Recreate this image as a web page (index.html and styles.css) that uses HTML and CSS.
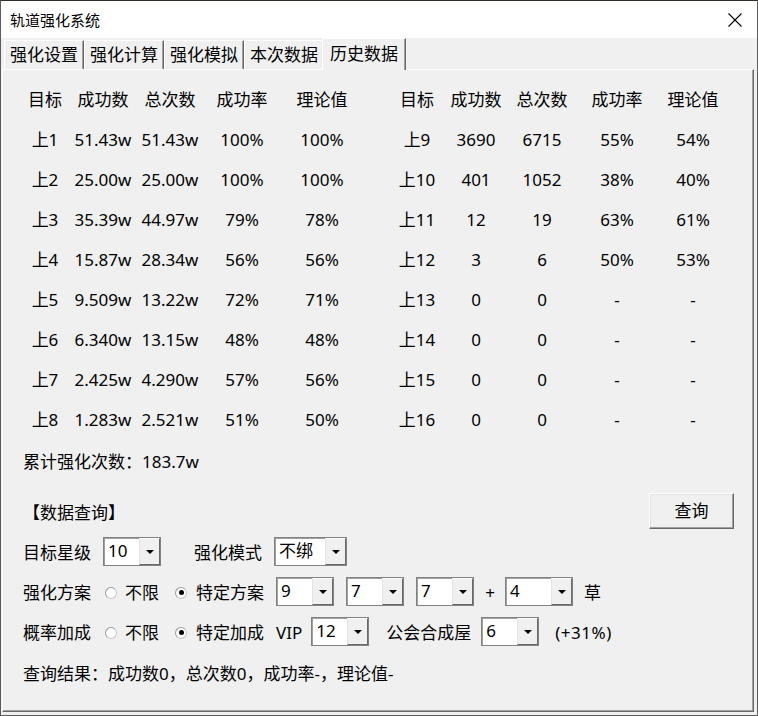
FILE: index.html
```html
<!DOCTYPE html>
<html lang="zh-CN">
<head>
<meta charset="utf-8">
<title>轨道强化系统</title>
<link rel="stylesheet" href="styles.css">
</head>
<body>
<div class="window">
  <div class="titlebar">
    <span class="title">轨道强化系统</span>
    <svg class="close" width="14" height="14" viewBox="0 0 14 14"><path d="M0.5 0.5 L13.5 13.5 M13.5 0.5 L0.5 13.5" stroke="#000" stroke-width="1.1" fill="none"/></svg>
  </div>
  <div class="tabs">
    <div class="tab">强化设置</div>
    <div class="tab">强化计算</div>
    <div class="tab">强化模拟</div>
    <div class="tab">本次数据</div>
    <div class="tab active">历史数据</div>
  </div>
  <div class="panel">
    <div class="grid">
      <div>目标</div><div>成功数</div><div>总次数</div><div>成功率</div><div>理论值</div><div></div><div>目标</div><div>成功数</div><div>总次数</div><div>成功率</div><div>理论值</div>
      <div>上1</div><div>51.43w</div><div>51.43w</div><div>100%</div><div>100%</div><div></div><div>上9</div><div>3690</div><div>6715</div><div>55%</div><div>54%</div>
      <div>上2</div><div>25.00w</div><div>25.00w</div><div>100%</div><div>100%</div><div></div><div>上10</div><div>401</div><div>1052</div><div>38%</div><div>40%</div>
      <div>上3</div><div>35.39w</div><div>44.97w</div><div>79%</div><div>78%</div><div></div><div>上11</div><div>12</div><div>19</div><div>63%</div><div>61%</div>
      <div>上4</div><div>15.87w</div><div>28.34w</div><div>56%</div><div>56%</div><div></div><div>上12</div><div>3</div><div>6</div><div>50%</div><div>53%</div>
      <div>上5</div><div>9.509w</div><div>13.22w</div><div>72%</div><div>71%</div><div></div><div>上13</div><div>0</div><div>0</div><div>-</div><div>-</div>
      <div>上6</div><div>6.340w</div><div>13.15w</div><div>48%</div><div>48%</div><div></div><div>上14</div><div>0</div><div>0</div><div>-</div><div>-</div>
      <div>上7</div><div>2.425w</div><div>4.290w</div><div>57%</div><div>56%</div><div></div><div>上15</div><div>0</div><div>0</div><div>-</div><div>-</div>
      <div>上8</div><div>1.283w</div><div>2.521w</div><div>51%</div><div>50%</div><div></div><div>上16</div><div>0</div><div>0</div><div>-</div><div>-</div>
    </div>
    <div class="total">累计强化次数：183.7w</div>
    <div class="query-head">
      <span class="qtitle">【数据查询】</span>
      <button class="btn">查询</button>
    </div>
    <div class="row">
      <span class="txt">目标星级</span>
      <span class="combo"><span class="val">10</span><span class="drop"></span></span>
      <span class="txt sp-mode">强化模式</span>
      <span class="combo wide"><span class="val">不绑</span><span class="drop"></span></span>
    </div>
    <div class="row">
      <span class="txt">强化方案</span>
      <span class="radio first"><span class="dot"></span><span class="txt">不限</span></span>
      <span class="radio second"><span class="dot on"></span><span class="txt">特定方案</span></span>
      <span class="combo"><span class="val">9</span><span class="drop"></span></span>
      <span class="combo"><span class="val">7</span><span class="drop"></span></span>
      <span class="combo"><span class="val">7</span><span class="drop"></span></span>
      <span class="txt plus">+</span>
      <span class="combo mid"><span class="val">4</span><span class="drop"></span></span>
      <span class="txt grass">草</span>
    </div>
    <div class="row">
      <span class="txt">概率加成</span>
      <span class="radio first"><span class="dot"></span><span class="txt">不限</span></span>
      <span class="radio second"><span class="dot on"></span><span class="txt">特定加成</span></span>
      <span class="txt vip">VIP</span>
      <span class="combo tight"><span class="val">12</span><span class="drop"></span></span>
      <span class="txt guild">公会合成屋</span>
      <span class="combo guild-combo"><span class="val">6</span><span class="drop"></span></span>
      <span class="txt bonus">(+31%)</span>
    </div>
    <div class="result">查询结果：成功数0，总次数0，成功率-，理论值-</div>
  </div>
</div>
</body>
</html>
```

FILE: styles.css
```css
* { box-sizing: border-box; }
html, body { margin: 0; padding: 0; }
body {
  width: 758px;
  height: 716px;
  background: #f0f0f0;
  font-family: "Noto Sans", "Noto Sans CJK SC", sans-serif;
  font-size: 17px;
  color: #000;
  overflow: hidden;
}
.window {
  width: 758px;
  height: 716px;
  border: 1px solid #5c5c5c;
  border-top-color: #2e2e26;
  background: #f0f0f0;
  display: flex;
  flex-direction: column;
}
.titlebar {
  height: 37px;
  background: #fff;
  display: flex;
  align-items: center;
  justify-content: space-between;
  padding: 0 15px 0 9px;
  flex: none;
}
.title {
  font-size: 15px;
  line-height: 20px;
}
.close { display: block; }
.tabs {
  height: 31px;
  flex: none;
  display: flex;
  align-items: flex-start;
  padding-left: 3px;
}
.tab {
  width: 80px;
  height: 29px;
  margin-top: 2px;
  border-top: 1px solid #fff;
  border-left: 1px solid #fff;
  border-right: 1px solid #696969;
  box-shadow: inset -1px 0 #a0a0a0;
  background: #f0f0f0;
  line-height: 27px;
  text-align: center;
  white-space: nowrap;
}
.tab.active {
  position: relative;
  z-index: 1;
  width: 84px;
  height: 32px;
  margin-top: 0;
  margin-left: -2px;
  line-height: 30px;
}
.panel {
  flex: 1;
  margin: 0 3px 3px 1px;
  border-top: 1px solid #fff;
  border-left: 1px solid #fff;
  border-right: 1px solid #696969;
  border-bottom: 1px solid #696969;
  box-shadow: inset -1px -1px #a0a0a0;
  background: #f0f0f0;
  padding: 10px 0 0 0;
}
.grid {
  display: grid;
  grid-template-columns: 58px 58px 76px 68px 92px 20px 58px 60px 72px 78px 74px;
  grid-auto-rows: 40px;
  margin-left: 13px;
  align-items: center;
  text-align: center;
  line-height: 24px;
  white-space: nowrap;
}
.total {
  margin-top: 2px;
  height: 40px;
  line-height: 40px;
  padding-left: 20px;
}
.query-head {
  margin-top: 11px;
  height: 36px;
  display: flex;
  align-items: center;
  justify-content: space-between;
  padding: 0 19px 0 20px;
}
.qtitle { line-height: 24px; padding-top: 4px; }
.btn {
  width: 85px;
  height: 36px;
  font: inherit;
  font-size: 17px;
  color: #000;
  background: #f0f0f0;
  border-top: 1px solid #fff;
  border-left: 1px solid #fff;
  border-right: 1px solid #696969;
  border-bottom: 1px solid #696969;
  box-shadow: inset -1px -1px #a0a0a0, inset 1px 1px #e3e3e3;
  padding: 0;
  line-height: 32px;
}
.row {
  display: flex;
  align-items: center;
  gap: 12px;
  height: 29px;
  padding-left: 20px;
  white-space: nowrap;
  line-height: 24px;
  margin-top: 11px;
}
.query-head + .row { margin-top: 8px; }
.txt { padding-top: 3px; }
.sp-mode { margin-left: 21px; }
.combo {
  width: 58px;
  height: 29px;
  display: inline-flex;
  align-items: stretch;
  border: 1px solid #828282;
  box-shadow: inset 1px 1px #a0a0a0;
  background: #fff;
  flex: none;
}
.combo.wide { width: 73px; }
.combo.mid { width: 68px; }
.combo .val {
  flex: 1;
  padding-left: 4px;
  line-height: 26px;
  font-size: 17px;
}
.combo .drop {
  width: 21px;
  flex: none;
  background: #f0f0f0;
  border-top: 1px solid #fff;
  border-left: 1px solid #e3e3e3;
  border-right: 1px solid #696969;
  border-bottom: 1px solid #696969;
  display: flex;
  align-items: center;
  justify-content: center;
}
.combo .drop::after {
  content: "";
  width: 0;
  height: 0;
  border-left: 4px solid transparent;
  border-right: 4px solid transparent;
  border-top: 4px solid #000;
}
.radio {
  display: inline-flex;
  align-items: center;
  gap: 8px;
}
.radio.first { margin-left: 2px; }
.radio.second { margin-left: 4px; gap: 9px; }
.dot {
  width: 12px;
  height: 12px;
  border-radius: 50%;
  border: 1px solid #c8c8c8;
  border-top-color: #9a9a9a;
  border-left-color: #9a9a9a;
  background: #fff;
  display: inline-flex;
  align-items: center;
  justify-content: center;
  margin-top: 2px;
}
.dot.on::after {
  content: "";
  width: 5px;
  height: 5px;
  border-radius: 50%;
  background: #000;
}
.plus { width: 10px; text-align: center; margin: 0 -2px 0 -1px; }
.grass { margin-left: -1px; }
.vip { margin-left: 0; }
.combo.tight { margin-left: -3px; }
.guild { margin-left: 5px; }
.guild-combo { margin-left: -2px; }
.bonus { margin-left: 4px; letter-spacing: 0.5px; }
.result {
  margin-top: 16px;
  padding-left: 20px;
  height: 24px;
  line-height: 24px;
  white-space: nowrap;
}
```
